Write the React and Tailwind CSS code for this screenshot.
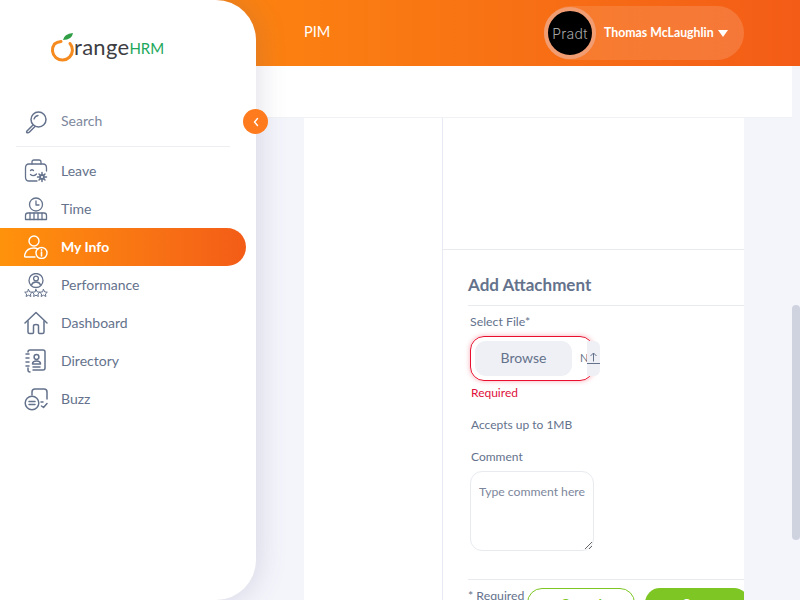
function Icon({ children, active }) {
  return (
    <svg viewBox="0 0 24 24" fill="none" stroke={active ? '#ffffff' : '#64728c'} strokeWidth="1.3" strokeLinecap="round" strokeLinejoin="round" className="w-6 h-6 shrink-0">
      {children}
    </svg>
  )
}

const SearchIcon = () => (
  <Icon>
    <circle cx="14.5" cy="9.5" r="7.5" strokeWidth="1.5" />
    <path d="M10 9 Q11 6 14 5.5" />
    <path d="M9 15 L3 21 Q2 22.5 3.5 22.8 Q4.5 23 5.5 22 L11 16.5" strokeWidth="1.5" />
  </Icon>
)

const LeaveIcon = () => (
  <Icon>
    <path d="M8 5 V3 Q8 1 10 1 H15 Q17 1 17 3 V5" />
    <path d="M13 22 H5 Q1.5 22 1.5 18 V9 Q1.5 5 5 5 H19 Q22.5 5 22.5 9 V12" />
    <path d="M6.5 11.5 Q8 10 9.5 11.5" />
    <path d="M6.5 15.5 Q9.5 18 12.5 15" />
    <circle cx="18" cy="18" r="2" strokeWidth="1.8" />
    <path d="M18 13.5 V15 M18 21 V22.5 M13.5 18 H15 M21 18 H22.5 M15 15 L16 16 M20 20 L21 21 M21 15 L20 16 M16 20 L15 21" strokeWidth="1.5" />
  </Icon>
)

const TimeIcon = () => (
  <Icon>
    <circle cx="12" cy="7.5" r="6.5" />
    <path d="M12 4 V8 H15" />
    <path d="M1.5 22.5 V18.5 Q1.5 16 4 16 H20 Q22.5 16 22.5 18.5 V22.5 Z" />
    <path d="M6 16 V22.5 M10 16 V22.5 M14 16 V22.5 M18 16 V22.5" />
  </Icon>
)

const InfoIcon = () => (
  <Icon active>
    <circle cx="10" cy="6" r="5" strokeWidth="1.4" />
    <path d="M1.5 22 Q0 22 1 19 Q3 13 10 13 Q12 13 14 14 M1.5 22 H11" strokeWidth="1.4" />
    <circle cx="17.5" cy="18" r="5.5" strokeWidth="1.4" />
    <path d="M17.5 17 V21 M17.5 14.8 V15.2" strokeWidth="1.6" />
  </Icon>
)

const Star = ({ x }) => (
  <path d={`M${x} 16.5 l1.2 2.4 2.6.3 -1.9 1.8 .5 2.5 -2.4 -1.3 -2.4 1.3 .5 -2.5 -1.9 -1.8 2.6 -.3 z`} strokeWidth="1" />
)

const PerformanceIcon = () => (
  <Icon>
    <circle cx="12" cy="7.5" r="7" />
    <circle cx="12" cy="5.5" r="2.4" />
    <path d="M7.5 12 Q8.5 9 12 9 Q15.5 9 16.5 12" />
    <Star x={4.5} />
    <Star x={12} />
    <Star x={19.5} />
  </Icon>
)

const DashboardIcon = () => (
  <Icon>
    <path d="M1 12 L12 1.5 L23 12" strokeWidth="1.5" />
    <path d="M4 10 V21 Q4 22.5 5.5 22.5 H8.5 Q9.5 22.5 9.5 21.5 V15 Q9.5 13.5 12 13.5 Q14.5 13.5 14.5 15 V21.5 Q14.5 22.5 15.5 22.5 H18.5 Q20 22.5 20 21 V10" strokeWidth="1.5" />
  </Icon>
)

const DirectoryIcon = () => (
  <Icon>
    <path d="M4 3 Q4 1 6 1 H19 Q21 1 21 3 V19 Q21 21 19 21 H9 M4 19 V21 Q4 23 6 23" strokeWidth="1.5" />
    <path d="M2 5 H5 M2 9 H5 M2 13 H5 M2 17 H5" strokeWidth="1.5" />
    <circle cx="12.5" cy="8" r="2.4" strokeWidth="1.5" />
    <path d="M8.5 15 Q8.5 12 12.5 12 Q16.5 12 16.5 15 Z" strokeWidth="1.5" />
    <path d="M9 18 H16" strokeWidth="1.5" />
  </Icon>
)

const BuzzIcon = () => (
  <Icon>
    <path d="M8 8 V5 Q8 2 11 2 H20 Q23 2 23 5 V12 M19 15 H17" strokeWidth="1.5" />
    <circle cx="8" cy="16" r="6.8" strokeWidth="1.5" />
    <path d="M5 14.5 H11 M5 17.5 H11" strokeWidth="1.5" />
    <path d="M17.5 19 L19.5 20.5 L23 16.5" strokeWidth="1.5" />
  </Icon>
)

function NavItem({ icon, label, active }) {
  if (active) {
    return (
      <div className="h-[38px] w-[246px] flex items-center gap-[13px] pl-6 rounded-r-[19px] bg-gradient-to-r from-[#ff920b] to-[#f35c17]">
        {icon}
        <span className="text-[14px] font-bold text-white -translate-y-px">{label}</span>
      </div>
    )
  }
  return (
    <div className="h-[38px] flex items-center gap-[13px] pl-6">
      {icon}
      <span className="text-[14px] text-[#64728c] -translate-y-px">{label}</span>
    </div>
  )
}

function Logo() {
  return (
    <div className="h-[66px] pl-[50px] pt-[31px] flex items-start">
      <svg viewBox="0 0 25 32" className="w-[25px] h-[32px] shrink-0">
        <path d="M13 9 Q14 3 23 2 Q22 9 13 9 Z" fill="#2f9e44" />
        <path d="M11 10.5 Q7 11 4.5 13 A10 10 0 1 0 20 12.5" fill="none" stroke="#f58a1f" strokeWidth="3" strokeLinecap="round" />
      </svg>
      <span className="text-[22px] leading-[28px] text-[#3d3d42] font-['Lato',sans-serif] -ml-[1px] mt-[2px] tracking-[0.3px]">range</span>
      <span className="text-[15px] leading-[28px] text-[#21a75a] font-['Lato',sans-serif] mt-[3px]">HRM</span>
    </div>
  )
}

function Sidebar() {
  return (
    <div className="relative z-10 w-[256px] h-[600px] shrink-0 bg-white rounded-r-[40px] shadow-[0_0_30px_rgba(90,90,130,0.22)]">
      <Logo />
      <div className="pt-[36px]">
        <div className="h-[45px] w-[214px] mx-4 pl-2 pb-[5px] flex items-center gap-[13px] border-b border-[#eceef2]">
          <SearchIcon />
          <span className="text-[14px] text-[#7d879c] -translate-y-px">Search</span>
        </div>
        <div className="pt-[5px]">
          <NavItem icon={<LeaveIcon />} label="Leave" />
          <NavItem icon={<TimeIcon />} label="Time" />
          <NavItem icon={<InfoIcon />} label="My Info" active />
          <NavItem icon={<PerformanceIcon />} label="Performance" />
          <NavItem icon={<DashboardIcon />} label="Dashboard" />
          <NavItem icon={<DirectoryIcon />} label="Directory" />
          <NavItem icon={<BuzzIcon />} label="Buzz" />
        </div>
      </div>
      {/* collapse button */}
      <button className="absolute left-[243px] top-[109px] w-[25px] h-[25px] rounded-full bg-[#ff7b1d] flex items-center justify-center">
        <svg viewBox="0 0 10 10" className="w-[10px] h-[10px]" fill="none" stroke="#fff" strokeWidth="1.4" strokeLinecap="round" strokeLinejoin="round">
          <path d="M6.5 1.5 L3.5 5 L6.5 8.5" />
        </svg>
      </button>
    </div>
  )
}

function TopBar() {
  return (
    <div className="h-[66px] shrink-0 flex items-center justify-between -ml-[216px] pl-[304px] pr-[56px] bg-gradient-to-r from-[#ff920b] to-[#f35c17]">
      <span className="text-[14.5px] text-white -translate-y-px">PIM</span>
      <div className="w-[200px] h-[54px] rounded-full bg-gradient-to-r from-white/10 to-white/15 flex items-center">
        <div className="w-[52px] h-[52px] rounded-full bg-black border-[4px] border-[#f29c72] flex items-center justify-center shrink-0">
          <span className="text-[14px] font-light text-[#a5a5a5] font-['Inter',sans-serif] tracking-[0.2px]">Pradt</span>
        </div>
        <span className="ml-2 text-[12.3px] font-bold text-white whitespace-nowrap">Thomas McLaughlin</span>
        <svg viewBox="0 0 10 7" className="w-[10px] h-[7px] ml-1 shrink-0"><path d="M0 0 H10 L5 7 Z" fill="#fff" /></svg>
      </div>
    </div>
  )
}

function Attachment() {
  return (
    <div className="pl-[25px] pt-[25px] w-[301px]">
      <h2 className="h-[31px] text-[17px] font-bold text-[#64728c] leading-[20px] border-b border-[#e8eaef] w-[276px]">Add Attachment</h2>
      <label className="block pl-[2px] mt-[8px] text-[12.3px] leading-[16px] text-[#64728c]">Select File*</label>
      <div className="ml-[2px] mt-[6px] relative w-[124px] h-[45px] rounded-[14px] border border-[#e8102e] shadow-[0_0_5px_rgba(235,20,50,0.35)] flex items-center pl-[4px]">
        <div className="w-[97px] h-[35px] rounded-[11px] bg-[#eff0f5] flex items-center justify-center text-[14px] text-[#64728c]">
          <span className="-translate-y-px">Browse</span>
        </div>
        <span className="ml-2 text-[11px] text-[#64728c]">N</span>
        {/* upload tile lies on the border */}
        <div className="absolute left-[116px] top-[4px] w-[13px] h-[35px] rounded-r-[6px] bg-[#eff0f5] flex items-center justify-center">
          <svg viewBox="0 0 13 13" className="w-[13px] h-[13px]" fill="none" stroke="#64728c" strokeWidth="1">
            <path d="M6.5 9.5 V1 M3.5 4 L6.5 1 L9.5 4 M0 11.5 H13" />
          </svg>
        </div>
      </div>
      <div className="ml-[3px] mt-[4px] text-[12px] leading-[16px] text-[#e0103a]">Required</div>
      <div className="ml-[3px] mt-[16px] text-[12px] leading-[16px] text-[#64728c]">Accepts up to 1MB</div>
      <label className="block ml-[3px] mt-[16px] text-[12px] leading-[16px] text-[#64728c]">Comment</label>
      <textarea
        placeholder="Type comment here"
        className="block ml-[2px] mt-[6px] w-[124px] h-[80px] rounded-[12px] border border-[#e8eaef] pl-2 pr-1 py-[12px] text-[12.2px] leading-[16px] placeholder:text-[#7d879c] outline-none"
      />
      <div className="mt-[28px] w-[276px] border-t border-[#e8eaef] relative h-[30px]">
        <span className="absolute left-0 top-[8px] text-[12.3px] leading-[16px] text-[#64728c] whitespace-nowrap">* Required</span>
        <div className="absolute left-[59px] top-[8px] flex gap-[10px]">
          <button className="w-[108px] h-[30px] rounded-full border border-[#7dc623] bg-white text-[14px] font-bold text-[#7dc623]">Cancel</button>
          <button className="w-[104px] h-[30px] rounded-full bg-[#7dc623] text-[14px] font-bold text-white">Save</button>
        </div>
      </div>
    </div>
  )
}

export default function App() {
  return (
    <div className="flex h-[600px] w-[800px] overflow-hidden bg-[#f4f4fb] font-['Lato',sans-serif]">
      <Sidebar />
      <div className="flex-1 flex flex-col -ml-10 min-w-0">
        <TopBar />
        <div className="flex-1 flex min-h-0">
          <div className="flex-1 min-w-0 flex flex-col">
            <div className="h-[52px] shrink-0 bg-white border-b border-[#f0f1f4]" />
            <div className="flex-1 pl-[88px] pr-[48px] min-h-0">
              <div className="h-full bg-white flex overflow-hidden">
                <div className="w-[139px] shrink-0 border-r border-[#e8eaf3]" />
                <div className="flex-1 min-w-0">
                  <div className="h-[132px] border-b border-[#e8eaef]" />
                  <Attachment />
                </div>
              </div>
            </div>
          </div>
          {/* scrollbar */}
          <div className="w-2 shrink-0 pt-[239px]">
            <div className="h-[235px] rounded-full bg-[#cfd2df]" />
          </div>
        </div>
      </div>
    </div>
  )
}
